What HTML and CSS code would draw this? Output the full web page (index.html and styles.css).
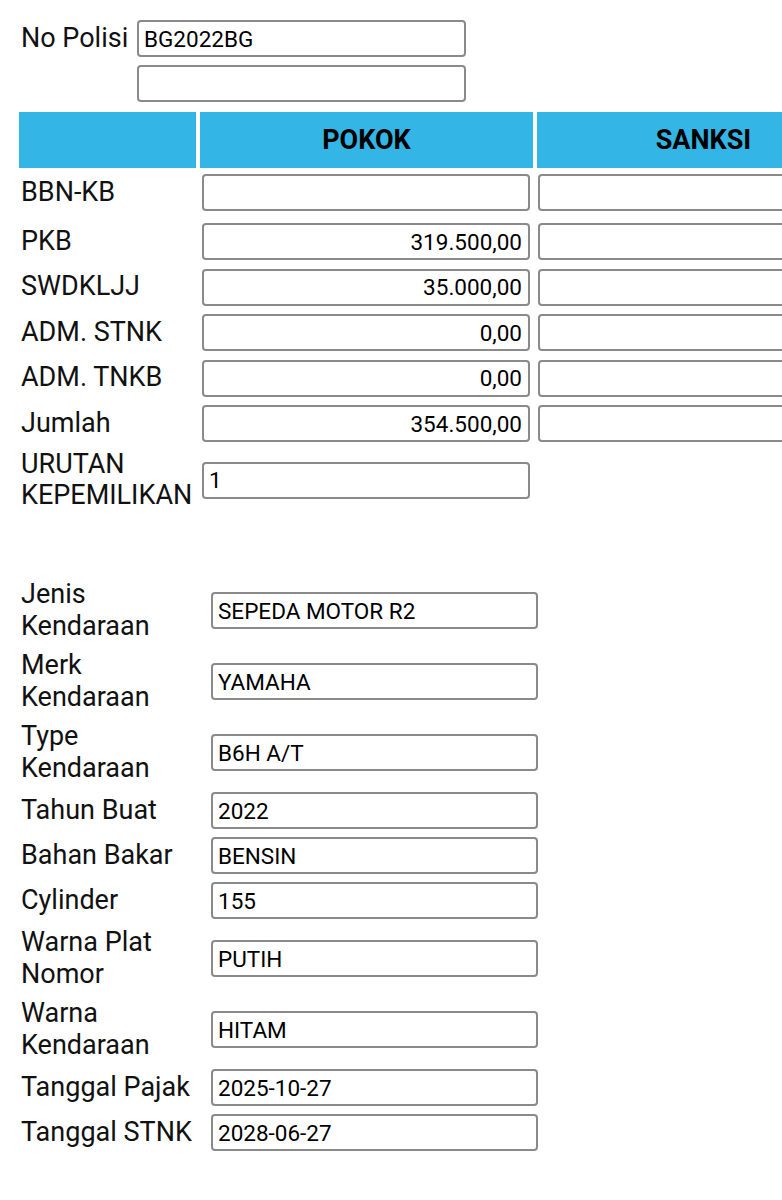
FILE: index.html
```html
<!DOCTYPE html>
<html lang="id">
<head>
<meta charset="utf-8">
<title>Info Pajak Kendaraan</title>
<link rel="stylesheet" href="styles.css">
</head>
<body>
<div class="page">
  <div class="polisi">
    <div class="label">No Polisi</div>
    <input class="field" type="text" value="BG2022BG">
    <div></div>
    <input class="field" type="text" value="">
  </div>

  <div class="pajak">
    <div class="row head">
      <div class="hcell"></div>
      <div class="hcell">POKOK</div>
      <div class="hcell">SANKSI</div>
    </div>
    <div class="row first">
      <div class="label">BBN-KB</div>
      <input class="field num c2" type="text" value="">
      <input class="field num c3" type="text" value="">
    </div>
    <div class="row">
      <div class="label">PKB</div>
      <input class="field num c2" type="text" value="319.500,00">
      <input class="field num c3" type="text" value="">
    </div>
    <div class="row">
      <div class="label">SWDKLJJ</div>
      <input class="field num c2" type="text" value="35.000,00">
      <input class="field num c3" type="text" value="">
    </div>
    <div class="row">
      <div class="label">ADM. STNK</div>
      <input class="field num c2" type="text" value="0,00">
      <input class="field num c3" type="text" value="">
    </div>
    <div class="row">
      <div class="label">ADM. TNKB</div>
      <input class="field num c2" type="text" value="0,00">
      <input class="field num c3" type="text" value="">
    </div>
    <div class="row">
      <div class="label">Jumlah</div>
      <input class="field num c2" type="text" value="354.500,00">
      <input class="field num c3" type="text" value="">
    </div>
    <div class="row urutan">
      <div class="label">URUTAN KEPEMILIKAN</div>
      <input class="field c2" type="text" value="1">
    </div>
  </div>

  <div class="kendaraan">
    <div class="label">Jenis Kendaraan</div><input class="field" type="text" value="SEPEDA MOTOR R2">
    <div class="label">Merk Kendaraan</div><input class="field" type="text" value="YAMAHA">
    <div class="label">Type Kendaraan</div><input class="field" type="text" value="B6H A/T">
    <div class="label">Tahun Buat</div><input class="field" type="text" value="2022">
    <div class="label">Bahan Bakar</div><input class="field" type="text" value="BENSIN">
    <div class="label">Cylinder</div><input class="field" type="text" value="155">
    <div class="label">Warna Plat Nomor</div><input class="field" type="text" value="PUTIH">
    <div class="label">Warna Kendaraan</div><input class="field" type="text" value="HITAM">
    <div class="label">Tanggal Pajak</div><input class="field" type="text" value="2025-10-27">
    <div class="label">Tanggal STNK</div><input class="field" type="text" value="2028-06-27">
  </div>
</div>
</body>
</html>
```

FILE: styles.css
```css
html, body {
  margin: 0;
  padding: 0;
  background: #ffffff;
  overflow: hidden;
}

body {
  font-family: Roboto, "Noto Sans", "Liberation Sans", sans-serif;
  color: #111111;
}

.page {
  padding-top: 20px;
}

.label {
  font-size: 27px;
  line-height: 31.5px;
  color: #111111;
}

.field {
  box-sizing: border-box;
  height: 37px;
  margin: 0;
  padding: 0 6px 0 5px;
  border: 2px solid #8a8a8a;
  border-radius: 4px;
  background: #ffffff;
  font-family: Roboto, "Noto Sans", "Liberation Sans", sans-serif;
  font-size: 22.5px;
  color: #000000;
  outline: none;
}

.num {
  text-align: right;
}

/* No Polisi block */
.polisi {
  display: grid;
  grid-template-columns: 116px 329px;
  row-gap: 8px;
  align-items: center;
  margin-left: 21px;
}

.polisi .field {
  width: 329px;
}

/* Pajak table (wider than the screen, clipped at the right edge) */
.pajak {
  display: flex;
  flex-direction: column;
  gap: 8.5px;
  margin-top: 10px;
  margin-left: 19px;
  overflow: hidden;
}

.row {
  display: grid;
  grid-template-columns: 177px 333px 333px;
  column-gap: 4px;
  align-items: center;
}

.row .label {
  padding-left: 2px;
}

.head {
  margin-bottom: -2.5px;
}

.hcell {
  height: 56px;
  background: #33b5e5;
  display: flex;
  align-items: center;
  justify-content: center;
  font-size: 27px;
  font-weight: 700;
  color: #000000;
}

.first {
  margin-bottom: 3.5px;
}

.urutan {
  margin-top: -2px;
}

.c2 {
  width: 328px;
  margin-left: 2px;
}

.c3 {
  width: 332px;
  margin-left: 1px;
}

/* Kendaraan block */
.kendaraan {
  display: grid;
  grid-template-columns: 192px 327px;
  row-gap: 8px;
  align-items: center;
  margin-top: 67.5px;
  margin-left: 19px;
}

.kendaraan .label {
  padding-left: 2px;
}

.kendaraan .field {
  width: 327px;
}
```
